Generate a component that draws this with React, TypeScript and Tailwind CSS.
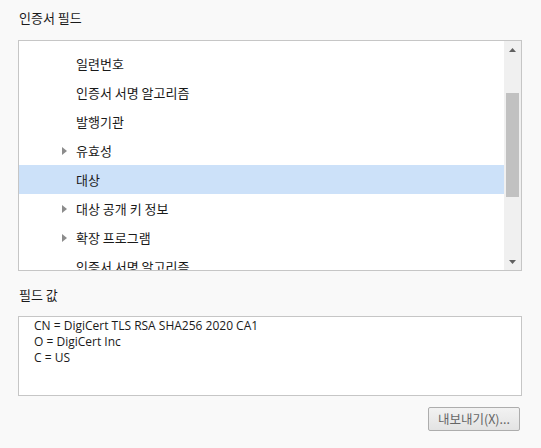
const KR = { fontFamily: '"Noto Sans CJK KR", "Noto Sans", sans-serif' };
const UI = { fontFamily: '"Open Sans", "Noto Sans CJK KR", sans-serif' };

type Row = { label: string; expandable?: boolean; selected?: boolean };

const rows: Row[] = [
  { label: "" },
  { label: "일련번호" },
  { label: "인증서 서명 알고리즘" },
  { label: "발행기관" },
  { label: "유효성", expandable: true },
  { label: "대상", selected: true },
  { label: "대상 공개 키 정보", expandable: true },
  { label: "확장 프로그램", expandable: true },
  { label: "인증서 서명 알고리즘" },
];

function Arrow() {
  return (
    <svg width="5" height="8" viewBox="0 0 5 8" className="block">
      <path d="M0 0 L5 4 L0 8 Z" fill="#8c8c8c" />
    </svg>
  );
}

function ScrollArrow({ up }: { up?: boolean }) {
  return (
    <svg width="7" height="4" viewBox="0 0 7 4" className="block">
      <path d={up ? "M0 4 L3.5 0 L7 4 Z" : "M0 0 L7 0 L3.5 4 Z"} fill="#606060" />
    </svg>
  );
}

export default function App() {
  return (
    <div className="w-[541px] h-[448px] bg-[#f9f9f9] overflow-hidden text-[#1a1a1a]" style={KR}>
      <div className="pl-[19px] pt-[9px] text-[13px] leading-[18px]">인증서 필드</div>

      {/* tree */}
      <div className="ml-[18px] mt-[13px] w-[504px] h-[231px] border border-[#c6c6c6] bg-white flex overflow-hidden">
        <div className="flex-1 overflow-hidden -mt-[21px]">
          {rows.map((r, i) => (
            <div
              key={i}
              className={`h-[29px] flex items-center text-[13px] ${r.selected ? "bg-[#cce1f9]" : ""}`}
            >
              <div className="w-[57px] flex justify-end pr-[9px]">{r.expandable && <Arrow />}</div>
              <span className="whitespace-nowrap">{r.label}</span>
            </div>
          ))}
        </div>
        <div className="w-[17px] bg-[#f0f0f0] flex flex-col items-center">
          <div className="h-[17px] flex items-center justify-center"><ScrollArrow up /></div>
          <div className="h-[35px]" />
          <div className="w-[13px] h-[104px] bg-[#c1c1c1]" />
          <div className="flex-1" />
          <div className="h-[17px] flex items-center justify-center"><ScrollArrow /></div>
        </div>
      </div>

      <div className="pl-[19px] pt-[15px] text-[13px] leading-[18px]">필드 값</div>

      {/* value box */}
      <div
        className="ml-[18px] mt-[12px] w-[504px] h-[80px] border border-[#c6c6c6] bg-white pl-[15px] pt-[1px] text-[12px] leading-[16px]"
        style={UI}
      >
        <div>CN = DigiCert TLS RSA SHA256 2020 CA1</div>
        <div>O = DigiCert Inc</div>
        <div>C = US</div>
      </div>

      <div className="flex justify-end pr-[21px] pt-[11px]">
        <button
          className="w-[92px] h-[24px] border border-[#adadad] rounded-[2px] bg-gradient-to-b from-[#f2f2f2] to-[#e3e3e3] text-[12.5px] text-[#666]"
          style={KR}
        >
          내보내기(X)...
        </button>
      </div>
    </div>
  );
}
